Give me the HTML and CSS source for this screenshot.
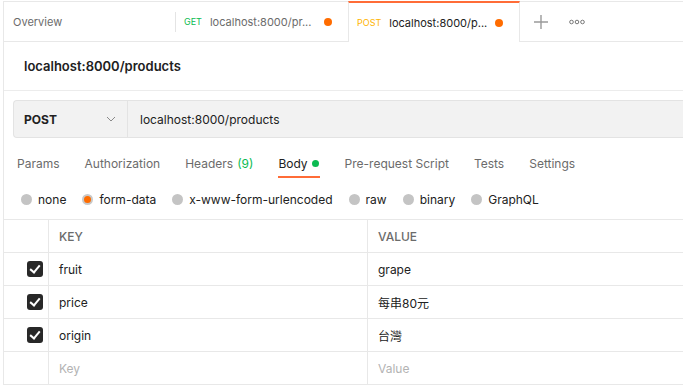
FILE: index.html
```html
<!DOCTYPE html>
<html lang="en">
<head>
    <meta charset="UTF-8">
    <meta name="viewport" content="width=device-width, initial-scale=1.0">
    <title>Postman - localhost:8000/products</title>
    <link rel="stylesheet" href="styles.css">
</head>
<body>
    <div class="app">
        <div class="tabbar">
            <div class="tab tab-overview">Overview</div>
            <div class="tab tab-request">
                <span class="method method-get">GET</span>
                <span class="tab-url">localhost:8000/pr...</span>
                <span class="dot"></span>
            </div>
            <div class="tab tab-request active">
                <span class="method method-post">POST</span>
                <span class="tab-url">localhost:8000/p...</span>
                <span class="dot"></span>
            </div>
            <div class="tab-action">
                <svg width="16" height="16" viewBox="0 0 16 16"><path d="M8 1v14M1 8h14" stroke="#9a9a9a" stroke-width="1.4" fill="none"/></svg>
            </div>
            <div class="tab-action more">
                <svg width="16" height="6" viewBox="0 0 16 6"><circle cx="2.5" cy="3" r="1.8" stroke="#777" stroke-width="1" fill="none"/><circle cx="8" cy="3" r="1.8" stroke="#777" stroke-width="1" fill="none"/><circle cx="13.5" cy="3" r="1.8" stroke="#777" stroke-width="1" fill="none"/></svg>
            </div>
        </div>

        <div class="request-header">
            <h1 class="request-title">localhost:8000/products</h1>
        </div>

        <div class="request">
            <div class="url-bar">
                <div class="method-select">
                    <span>POST</span>
                    <svg width="10" height="6" viewBox="0 0 10 6"><path d="M1 1l4 4 4-4" stroke="#8a8a8a" stroke-width="1" fill="none"/></svg>
                </div>
                <div class="url-input">localhost:8000/products</div>
            </div>

            <div class="req-tabs">
                <div class="req-tab">Params</div>
                <div class="req-tab">Authorization</div>
                <div class="req-tab">Headers <span class="count">(9)</span></div>
                <div class="req-tab active">Body <span class="green-dot"></span></div>
                <div class="req-tab">Pre-request Script</div>
                <div class="req-tab">Tests</div>
                <div class="req-tab">Settings</div>
            </div>

            <div class="body-types">
                <label class="radio"><span class="circle"></span>none</label>
                <label class="radio checked"><span class="circle"></span>form-data</label>
                <label class="radio"><span class="circle"></span>x-www-form-urlencoded</label>
                <label class="radio"><span class="circle"></span>raw</label>
                <label class="radio"><span class="circle"></span>binary</label>
                <label class="radio"><span class="circle"></span>GraphQL</label>
            </div>
        </div>

        <div class="kv-table">
            <div class="kv-row kv-head">
                <div class="cell cell-check"></div>
                <div class="cell cell-key">KEY</div>
                <div class="cell cell-value">VALUE</div>
            </div>
            <div class="kv-row">
                <div class="cell cell-check"><span class="checkbox"></span></div>
                <div class="cell cell-key">fruit</div>
                <div class="cell cell-value">grape</div>
            </div>
            <div class="kv-row">
                <div class="cell cell-check"><span class="checkbox"></span></div>
                <div class="cell cell-key">price</div>
                <div class="cell cell-value">每串80元</div>
            </div>
            <div class="kv-row">
                <div class="cell cell-check"><span class="checkbox"></span></div>
                <div class="cell cell-key">origin</div>
                <div class="cell cell-value">台灣</div>
            </div>
            <div class="kv-row placeholder">
                <div class="cell cell-check"></div>
                <div class="cell cell-key">Key</div>
                <div class="cell cell-value">Value</div>
            </div>
        </div>
    </div>
</body>
</html>
```

FILE: styles.css
```css
body {
    margin: 0;
    font-family: Inter, "Noto Sans CJK TC", sans-serif;
    color: #212121;
    background: #fff;
    overflow: hidden;
}

.app {
    margin-left: 3px;
    border-left: 1px solid #e8e8e8;
    min-height: 385px;
}

/* top tab strip */
.tabbar {
    display: flex;
    align-items: stretch;
    height: 39px;
    margin-top: 1px;
    border-top: 1px solid #e8e8e8;
    border-bottom: 1px solid #e8e8e8;
}

.tab {
    display: flex;
    align-items: center;
    box-sizing: border-box;
    font-size: 11px;
    color: #6b6b6b;
    white-space: nowrap;
}

.tab-overview {
    width: 172px;
    padding-left: 9px;
    position: relative;
}

.tab-overview::after {
    content: "";
    position: absolute;
    right: 0;
    top: 10px;
    bottom: 9px;
    border-right: 1px solid #e4e4e4;
}

.tab-request {
    width: 172px;
    padding: 0 16px 0 8px;
}

.tab-request.active {
    background: #fff;
    border-top: 2px solid #ff6c37;
    border-left: 1px solid #e8e8e8;
    border-right: 1px solid #e8e8e8;
    margin-top: -1px;
    margin-bottom: -1px;
    color: #212121;
}

.method {
    font-size: 9px;
    margin-right: 8px;
}

.method-get { color: #0cbb52; }
.method-post { color: #ffb400; }

.tab-url {
    flex: 1;
}

.dot {
    width: 8px;
    height: 8px;
    border-radius: 50%;
    background: #ff6c00;
    margin-left: auto;
}

.tab-action {
    display: flex;
    align-items: center;
    justify-content: center;
    width: 42px;
}

.tab-action.more {
    width: 30px;
}

/* request name */
.request-header {
    height: 48px;
    display: flex;
    align-items: center;
    padding-left: 20px;
    border-bottom: 1px solid #ececec;
}

.request-title {
    margin: 0;
    font-size: 13px;
    font-weight: 600;
    color: #212121;
}

.request {
    padding: 9px 0 0 9px;
}

.url-bar {
    display: flex;
    height: 38px;
    box-sizing: border-box;
    background: #f2f2f2;
    border: 1px solid #e3e3e3;
    border-right: none;
    border-radius: 4px 0 0 4px;
}

.method-select {
    width: 114px;
    box-sizing: border-box;
    display: flex;
    align-items: center;
    justify-content: space-between;
    padding: 0 11px 0 10px;
    border-right: 1px solid #e3e3e3;
    font-size: 12px;
    font-weight: 700;
}

.url-input {
    display: flex;
    align-items: center;
    padding-left: 12px;
    font-size: 12px;
}

/* Params / Body ... */
.req-tabs {
    display: flex;
    gap: 25px;
    padding-left: 4px;
    margin-top: 15px;
    height: 42px;
}

.req-tab {
    font-size: 12px;
    color: #6b6b6b;
    padding-top: 3px;
    height: 24px;
    box-sizing: border-box;
    display: flex;
    align-items: flex-start;
    gap: 4px;
}

.req-tab.active {
    color: #212121;
    border-bottom: 2px solid #ff6c37;
    height: 25px;
    padding-right: 1px;
}

.count {
    color: #0cbb52;
}

.green-dot {
    width: 7px;
    height: 7px;
    border-radius: 50%;
    background: #0cbb52;
    margin-top: 4px;
}

/* body type radios */
.body-types {
    display: flex;
    gap: 16px;
    padding-left: 8px;
    height: 20px;
    align-items: center;
    margin-top: -6px;
}

.radio {
    display: flex;
    align-items: center;
    gap: 6px;
    font-size: 12px;
    color: #212121;
}

.circle {
    width: 11px;
    height: 11px;
    border-radius: 50%;
    background: #c4c4c4;
    box-sizing: border-box;
}

.radio.checked .circle {
    background: #ff6c00;
    border: 2px solid #c9c9c9;
}

/* key / value table */
.kv-table {
    margin-top: 10px;
    border-top: 1px solid #e8e8e8;
}

.kv-row {
    display: flex;
    height: 33px;
    box-sizing: border-box;
    border-bottom: 1px solid #e8e8e8;
}

.cell {
    display: flex;
    align-items: center;
    box-sizing: border-box;
    font-size: 12px;
}

.cell-check {
    width: 45px;
    justify-content: flex-end;
    padding-right: 5px;
    border-right: 1px solid #e8e8e8;
}

.cell-key {
    width: 319px;
    padding-left: 10px;
    border-right: 1px solid #e8e8e8;
}

.cell-value {
    flex: 1;
    padding-left: 10px;
}

.kv-head .cell {
    font-size: 12px;
    font-weight: 500;
    color: #6b6b6b;
}

.placeholder .cell {
    color: #b3b3b3;
}

.checkbox {
    width: 16px;
    height: 16px;
    border-radius: 3px;
    background: #282828;
    position: relative;
}

.checkbox::after {
    content: "";
    position: absolute;
    left: 5px;
    top: 2px;
    width: 4px;
    height: 8px;
    border: solid #fff;
    border-width: 0 2px 2px 0;
    transform: rotate(40deg);
}
```
